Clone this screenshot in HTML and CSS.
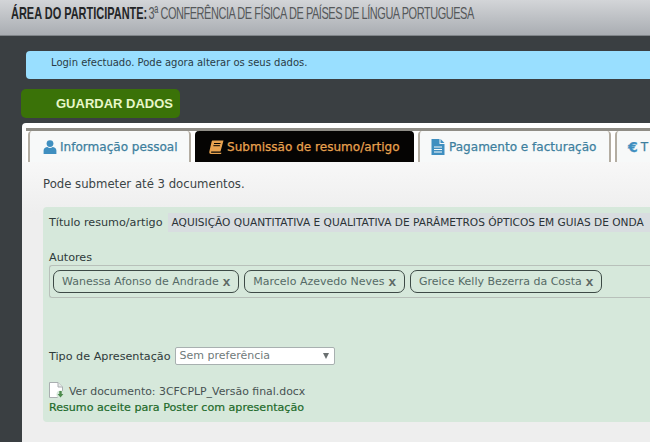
FILE: index.html
```html
<!DOCTYPE html>
<html lang="pt">
<head>
<meta charset="utf-8">
<title>Área do participante</title>
<link rel="stylesheet" href="styles.css">
</head>
<body>
<div class="page">
  <header class="topbar"><h1><strong>ÁREA DO PARTICIPANTE:</strong> 3ª CONFERÊNCIA DE FÍSICA DE PAÍSES DE LÍNGUA PORTUGUESA</h1></header>
  <div class="notice">Login efectuado. Pode agora alterar os seus dados.</div>
  <button class="save">GUARDAR DADOS</button>
  <main class="card">
    <nav class="tabs">
      <a class="tab tab-a"><svg class="ico" viewBox="0 0 14 14"><circle cx="7" cy="3.6" r="3.4"/><path d="M0.6 14V10.6C0.6 8.2 2.6 6.9 4.4 6.9 5.2 7.6 6 7.9 7 7.9 8 7.9 8.8 7.6 9.6 6.9 11.4 6.9 13.4 8.2 13.4 10.6V14Z"/></svg>Informação pessoal</a>
      <a class="tab tab-active"><svg class="ico" viewBox="0 0 15 14"><path d="M4 0.5H14.5L11.5 11.5H2.5C1.8 11.5 1.8 12.7 2.5 12.7H12.5L12 14H2C0.5 14 0 12.8 0.4 11.3L2.6 1.8C2.8 1 3.2 0.5 4 0.5Z"/><path class="cut" d="M5 3.5H11.5M4.4 5.7H10.9"/></svg>Submissão de resumo/artigo</a>
      <a class="tab tab-c"><svg class="ico" viewBox="0 0 13 16"><path d="M0 0H8V5H13V16H0ZM9 0L13 4H9Z"/><path class="cut-l" d="M2.5 8H10.5M2.5 10.5H10.5M2.5 13H10.5"/></svg>Pagamento e facturação</a>
      <a class="tab tab-d"><span class="euro">€</span>T</a>
    </nav>
    <section class="body">
      <p class="intro">Pode submeter até 3 documentos.</p>
      <div class="panel">
        <div class="title-row"><label>Título resumo/artigo</label><span class="title-field">AQUISIÇÃO QUANTITATIVA E QUALITATIVA DE PARÂMETROS ÓPTICOS EM GUIAS DE ONDA</span></div>
        <div class="label">Autores</div>
        <div class="tags">
          <span class="tag">Wanessa Afonso de Andrade <b>x</b></span>
          <span class="tag">Marcelo Azevedo Neves <b>x</b></span>
          <span class="tag">Greice Kelly Bezerra da Costa <b>x</b></span>
        </div>
        <div class="type-row"><label>Tipo de Apresentação</label><span class="select">Sem preferência<i class="arrow"></i></span></div>
        <div class="doc"><svg class="doc-ico" viewBox="0 0 16 17"><path d="M0.5 0.5H9L13.5 5V15.5H0.5Z" fill="#fff" stroke="#a9aeb0"/><path d="M9 0.5V5H13.5" fill="#e6e9e9" stroke="#a9aeb0"/><circle cx="11.5" cy="12.5" r="4" fill="#d6e8db"/><path d="M10.3 9H12.7V12H14.4L11.5 15.6 8.6 12H10.3Z" fill="#4d8b4d"/></svg><span>Ver documento: 3CFCPLP_Versão final.docx</span></div>
        <div class="accepted">Resumo aceite para Poster com apresentação</div>
      </div>
    </section>
  </main>
</div>
</body>
</html>
```
FILE: styles.css
```css
html, body { margin: 0; padding: 0; height: 442px; overflow: hidden; background: #3a3f42; }
body { font-family: "DejaVu Sans", Verdana, sans-serif; font-size: 11px; color: #3c4a4c; }
.page { width: 650px; height: 442px; overflow: hidden; }
.topbar { height: 36px; box-sizing: border-box; border-bottom: 1px solid #7f8488; background: linear-gradient(#d3d5d8, #a9adb2); padding: 4px 0 0 11px; }
.topbar h1 { margin: 0; width: max-content; font: normal 17px/20px "Liberation Sans", sans-serif; color: #55585a; letter-spacing: -0.69px; white-space: nowrap; transform: scaleX(0.645); transform-origin: left center; }
.topbar strong { color: #232527; letter-spacing: 0; margin-right: -2px; }
.notice { margin: 15px 0 0 26px; height: 28px; line-height: 24px; box-sizing: border-box; padding-left: 25px; background: #99dfff; border-radius: 4px 0 0 4px; font-size: 10px; color: #2a3c46; }
.save { display: block; margin: 10px 0 0 21px; width: 159px; height: 29px; border: 0; border-radius: 5px; background: #3a7208; color: #e8f7c8; font: bold 13px "Liberation Sans", sans-serif; padding: 0 0 0 35px; text-align: left; white-space: nowrap; }
.card { margin: 5px 0 0 22px; height: 330px; background: linear-gradient(#fff, #eee 90px); border-radius: 4px 0 0 0; padding-top: 5px; overflow: hidden; }
.tabs { display: flex; gap: 4px; height: 34px; box-sizing: border-box; margin-left: 4px; padding: 3px 0 0 2px; background: linear-gradient(#8f8d86 3px, #fff 3px); }
.tab { flex: none; display: flex; align-items: center; height: 31px; box-sizing: border-box; font-size: 12.05px; -webkit-text-stroke: 0.25px currentColor; white-space: nowrap; color: #3d7f9e; background: #f7f9f9; border: solid #b3ada2; border-width: 0 2px; border-radius: 4px 4px 0 0; padding-left: 13px; }
.tab-a { width: 163px; }
.tab-active { width: 219px; padding-left: 12px; background: #050403; border-color: #050403; color: #e8a24f; }
.tab-c { width: 193px; padding-left: 11px; }
.tab-d { width: 60px; padding-left: 11px; }
.ico { width: 14px; height: 14px; margin-right: 3px; fill: currentColor; flex: none; }
.tab-a .ico { fill: #3f8fc0; }
.tab-c .ico { fill: #3f8fc0; height: 16px; margin-right: 4px; }
.tab-active .ico { fill: #e8a24f; width: 15px; }
.cut { fill: none; stroke: #050403; stroke-width: 1; }
.cut-l { fill: none; stroke: #f7f9f9; stroke-width: 1; }
.euro { font-weight: bold; color: #3f8fc0; font-size: 14px; margin-right: 3px; }
.body { padding: 15px 0 0 21px; }
.intro { margin: 0 0 15px; line-height: 15px; font-size: 11.7px; color: #3b4446; }
.panel { height: 215px; box-sizing: border-box; background: #d6e8db; border-radius: 4px 0 0 4px; padding: 6px 0 0 6px; }
.title-row { display: flex; align-items: center; gap: 5px; height: 19px; white-space: nowrap; }
.title-row label, .type-row label, .label { color: #2e3a3a; font-size: 11.2px; }
.title-field { display: block; height: 19px; line-height: 19px; background: #d8dde0; padding: 0 8px 0 4px; font-size: 10.6px; color: #2a3236; min-width: 500px; }
.label { margin-top: 18px; line-height: 15px; }
.tags { display: flex; gap: 5px; height: 33px; box-sizing: border-box; border: 1px solid #b8c0ba; border-right: 0; border-radius: 3px 0 0 3px; padding: 3px; align-items: center; }
.tag { display: inline-flex; align-items: center; gap: 4px; height: 23px; box-sizing: border-box; border: 1px solid #3d4a46; border-radius: 7px; padding: 0 8px; background: #d6e8db; color: #556a66; font-size: 11px; white-space: nowrap; }
.tag b { color: #5f6a66; font: bold 13.5px/1 "Liberation Sans", sans-serif; }
.type-row { display: flex; align-items: center; gap: 4px; height: 18px; margin-top: 49px; }
.select { position: relative; display: block; width: 160px; height: 18px; box-sizing: border-box; line-height: 15px; padding-left: 4px; background: #fff; border: 1px solid #a8b0b0; border-radius: 2px; color: #6f7a7a; font-size: 11px; }
.arrow { position: absolute; right: 5px; top: 5px; border: solid transparent; border-width: 6px 3.5px 0; border-top-color: #6a6f70; }
.doc { display: flex; align-items: center; height: 18px; margin-top: 16px; color: #475252; }
.doc-ico { width: 16px; height: 17px; margin-right: 4px; }
.doc span { font-size: 10.9px; padding-top: 2px; }
.accepted { line-height: 15px; margin-top: 1px; color: #1d6a2a; font-size: 11.1px; -webkit-text-stroke: 0.2px currentColor; }
```
